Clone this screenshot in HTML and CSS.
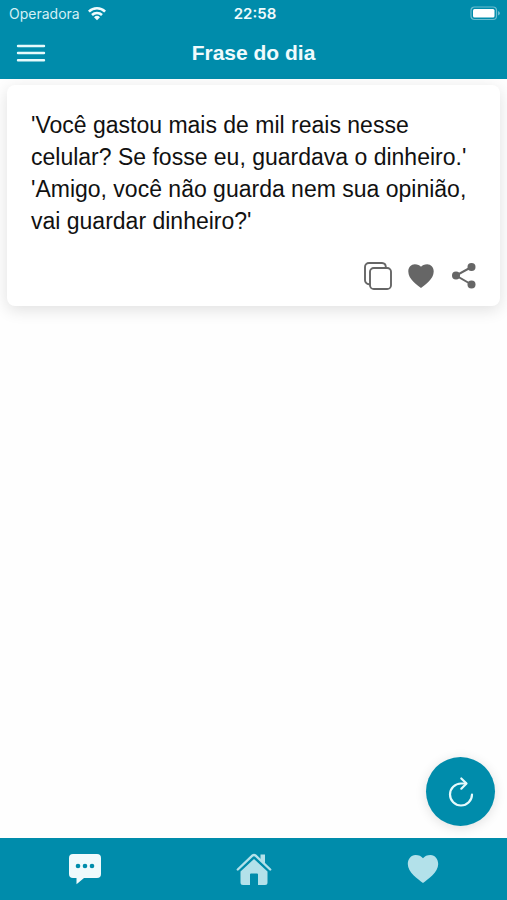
FILE: index.html
```
<!DOCTYPE html>
<html lang="pt-BR">
	<head>
		<meta charset="utf-8">
		<meta name="viewport" content="width=device-width, initial-scale=1">
		<title>Frase do dia</title>
		<link rel="stylesheet" href="styles.css">
	</head>
	<body>
		<header class="header">
			<div class="status">
				<div class="carrier">
					<span>Operadora</span>
					<svg width="20" height="15" viewBox="0 0 20 15" fill="none" stroke="#f0fbfd" stroke-width="2.6">
						<path d="M1.9 5.6a11.6 11.6 0 0 1 16.2 0"/>
						<path d="M5 9a7.2 7.2 0 0 1 10 0"/>
						<path d="M10 14.2l-3-3a4.3 4.3 0 0 1 6 0z" fill="#f0fbfd" stroke="none"/>
					</svg>
				</div>
				<span class="time">22:58</span>
				<div class="battery">
					<svg width="31" height="15" viewBox="0 0 31 15">
						<rect x="1" y="1" width="25.5" height="12.5" rx="3.5" fill="none" stroke="#6bbdd0" stroke-width="1.2"/>
						<rect x="3" y="3" width="21.5" height="8.5" rx="1.5" fill="#fff"/>
						<path d="M28 5v4.5q2-.8 2-2.2T28 5z" fill="#6bbdd0"/>
					</svg>
				</div>
			</div>
			<div class="navbar">
				<button class="menu" type="button" aria-label="Menu">
					<svg width="30" height="20" viewBox="0 0 30 20" stroke="#e6fafc" stroke-width="2.4" stroke-linecap="round">
						<path d="M2 3h26M2 10h26M2 17.2h26"/>
					</svg>
				</button>
				<h1 class="title">Frase do dia</h1>
			</div>
		</header>

		<main class="content">
			<article class="card">
				<p class="quote">'Você gastou mais de mil reais nesse celular? Se fosse eu, guardava o dinheiro.' 'Amigo, você não guarda nem sua opinião, vai guardar dinheiro?'</p>
				<div class="actions">
					<button type="button" aria-label="Copiar">
						<svg width="28" height="28" viewBox="0 0 28 28" fill="none" stroke="#666" stroke-width="1.9">
							<rect x="6" y="6" width="21" height="21" rx="3.8"/>
							<path d="M6 22.2H5A4 4 0 0 1 1 18V5a4 4 0 0 1 4-4h13a4 4 0 0 1 3.8 3.8V6"/>
						</svg>
					</button>
					<button type="button" aria-label="Favoritar">
						<svg width="28" height="28" viewBox="0 0 28 28" fill="#666">
							<path d="M14 26C10.200 23 1.300 17 1.300 9.400C1.300 5.200 4.200 2.300 7.800 2.300C10.600 2.300 12.800 3.300 14 4.800C15.200 3.300 17.400 2.300 20.200 2.300C23.800 2.300 26.700 5.200 26.700 9.400C26.700 17 17.800 23 14 26z"/>
						</svg>
					</button>
					<button type="button" aria-label="Compartilhar">
						<svg width="28" height="28" viewBox="0 0 28 28" fill="#666">
							<path d="M21.500 5L6 13.500L21.500 22.500" fill="none" stroke="#666" stroke-width="2"/>
							<circle cx="21.500" cy="5" r="4"/>
							<circle cx="6" cy="13.500" r="4"/>
							<circle cx="21.500" cy="22.500" r="4"/>
						</svg>
					</button>
				</div>
			</article>
		</main>

		<footer class="footer">
			<button class="refresh" type="button" aria-label="Nova frase">
				<svg width="30" height="32" viewBox="0 0 30 32" fill="none" stroke="#e6fafc" stroke-width="2.2" stroke-linecap="round" stroke-linejoin="round">
					<path d="M26 18.500A11 11 0 1 1 15 7.500H20"/>
					<path d="M15.300 2.500L20.500 7.500L15.300 12.700"/>
				</svg>
			</button>
			<nav class="tabs">
				<a href="#frases" class="active" aria-label="Frases">
					<svg width="36" height="36" viewBox="0 0 36 36" fill="#f0fafc">
						<path d="M6 3h24a4 4 0 0 1 4 4v16a4 4 0 0 1-4 4H17l-7.500 6.200V27H6a4 4 0 0 1-4-4V7a4 4 0 0 1 4-4z"/>
						<g fill="#008cab">
							<circle cx="11" cy="15" r="2.300"/>
							<circle cx="18" cy="15" r="2.300"/>
							<circle cx="25" cy="15" r="2.300"/>
						</g>
					</svg>
				</a>
				<a href="#inicio" aria-label="Início">
					<svg width="36" height="36" viewBox="0 0 36 36" fill="#b3e1ea">
						<path d="M18 8L31.500 20.500V31.500a2.500 2.500 0 0 1-2.500 2.500H22V23.500a1 1 0 0 0-1-1H15a1 1 0 0 0-1 1V34H7a2.500 2.500 0 0 1-2.500-2.500V20.500z"/>
						<path d="M24.500 3.500h4.500V12.500l-4.500-4z"/>
						<path d="M1.800 18.500L16.600 4.500q1.400-1.200 2.800 0L34.200 18.500" fill="none" stroke="#b3e1ea" stroke-width="2.400" stroke-linecap="round"/>
						<path d="M3.500 20L18 6.700L32.500 20" fill="none" stroke="#008cab" stroke-width="1"/>
					</svg>
				</a>
				<a href="#favoritos" aria-label="Favoritos">
					<svg width="36" height="36" viewBox="0 0 36 36" fill="#b3e1ea">
						<path d="M18 32C13 28 2.800 21.500 2.800 13C2.800 8 6 4 10.500 4C13.800 4 16.500 5.200 18 7.300C19.500 5.200 22.200 4 25.500 4C30 4 33.200 8 33.200 13C33.200 21.500 23 28 18 32z"/>
					</svg>
				</a>
			</nav>
		</footer>
	</body>
</html>
```
FILE: styles.css
```
*{margin:0;padding:0;box-sizing: border-box;}
body{
	display: flex;
	flex-direction: column;
	min-height: 100vh;
	background: #fefefe;
	font-family: "Liberation Sans", Arial, sans-serif;
	color: #111;
}
button{
	border: 0;
	background: none;
	cursor: pointer;
}
svg{display: block;}

.header{
	background: #008cab;
	color: #f0fbfd;
}
.status{
	display: grid;
	grid-template-columns: 1fr auto 1fr;
	align-items: center;
	height: 27px;
	padding: 0 6px 0 9px;
	font-family: Inter, sans-serif;
	font-size: 15px;
	line-height: 18px;
}
.carrier{
	display: flex;
	align-items: center;
	gap: 7px;
	font-size: 14px;
	color: #d4f0f5;
}
.time{font-weight: 600;}
.battery{justify-self: end;}
.navbar{
	display: grid;
	grid-template-columns: 30px 1fr 30px;
	align-items: center;
	height: 52px;
	padding: 0 16px;
}
.title{
	font-size: 21px;
	line-height: 28px;
	text-align: center;
}

.content{
	flex: 1;
	padding: 6px 7px;
}
.card{
	padding: 24px 22px 16px 24px;
	border-radius: 8px;
	background: #fff;
	box-shadow: 0 4px 16px rgba(0,0,0,0.12);
}
.quote{
	font-size: 23px;
	line-height: 32px;
}
.actions{
	display: flex;
	justify-content: flex-end;
	gap: 15px;
	margin-top: 25px;
}

.footer{
	position: sticky;
	bottom: 0;
	background: #008cab;
}
/* floats above the tab bar */
.refresh{
	position: absolute;
	right: 12px;
	bottom: 74px;
	display: flex;
	align-items: center;
	justify-content: center;
	width: 69px;
	height: 69px;
	border-radius: 50%;
	background: #008cab;
	box-shadow: 0 2px 12px rgba(0,0,0,0.12);
}
.tabs{
	display: flex;
	height: 62px;
}
.tabs a{
	flex: 1;
	display: flex;
	align-items: center;
	justify-content: center;
}
```
